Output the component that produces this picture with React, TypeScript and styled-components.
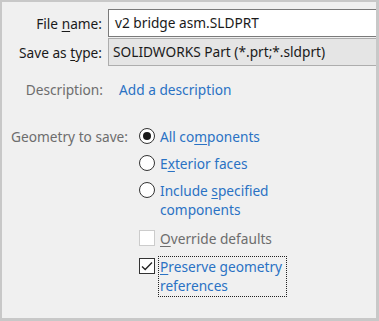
import * as React from 'react';
import styled, { createGlobalStyle } from 'styled-components';

const GlobalStyle = createGlobalStyle`
  html, body {
    margin: 0;
    padding: 0;
    background: #f0f0f0;
  }
  * {
    box-sizing: border-box;
  }
`;

const Frame = styled.div`
  width: 379px;
  height: 321px;
  overflow: hidden;
  background: #f0f0f0;
  border: 2px solid #c8c8c8;
  border-right-width: 3px;
  border-bottom-width: 3px;
  font-family: 'Noto Sans', 'Open Sans', sans-serif;
  font-size: 13.7px;
  color: #1a1a1a;
  padding-top: 7px;
`;

const FieldRow = styled.div<{ $gap?: number }>`
  display: flex;
  align-items: center;
  margin-bottom: ${(p) => p.$gap ?? 0}px;
`;

const Label = styled.label<{ $width: number; $muted?: boolean }>`
  width: ${(p) => p.$width}px;
  flex: none;
  text-align: right;
  white-space: nowrap;
  color: ${(p) => (p.$muted ? '#6d6d6d' : '#1a1a1a')};
`;

const TextBox = styled.div`
  margin-left: 6px;
  flex: 1;
  height: 28px;
  background: #ffffff;
  border: 1px solid #7a7a7a;
  border-right: none;
  padding: 0 0 1px 6px;
  display: flex;
  align-items: center;
  margin-right: -4px;
`;

const Combo = styled(TextBox)`
  background: #e5e5e5;
  border-color: #adadad;
  padding-left: 4px;
`;

const Link = styled.a`
  color: #2a72c4;
  text-decoration: none;
  white-space: nowrap;
`;

const Key = styled.span`
  text-decoration: underline;
  text-underline-offset: 2px;
`;

const Options = styled.div`
  display: flex;
  flex-direction: column;
  gap: 8px;
  margin-left: 11px;
`;

const Option = styled.div<{ $extra?: number }>`
  display: flex;
  align-items: flex-start;
  gap: 5px;
  line-height: 19px;
  margin-top: ${(p) => p.$extra ?? 0}px;
`;

const Radio = styled.span<{ $checked?: boolean }>`
  flex: none;
  width: 16px;
  height: 16px;
  margin-top: 1px;
  border-radius: 50%;
  border: 1px solid #333333;
  background: #ffffff;
  display: flex;
  align-items: center;
  justify-content: center;
  &::after {
    content: '';
    width: 8px;
    height: 8px;
    border-radius: 50%;
    background: #1a1a1a;
    display: ${(p) => (p.$checked ? 'block' : 'none')};
  }
`;

const Box = styled.span<{ $disabled?: boolean }>`
  flex: none;
  width: 16px;
  height: 16px;
  margin-top: 1px;
  border: 1px solid ${(p) => (p.$disabled ? '#cccccc' : '#333333')};
  background: #ffffff;
  display: flex;
  align-items: center;
  justify-content: center;
`;

const OptionText = styled.span<{ $disabled?: boolean; $focus?: boolean }>`
  color: ${(p) => (p.$disabled ? '#6d6d6d' : '#2a72c4')};
  white-space: nowrap;
  outline: ${(p) => (p.$focus ? '1px dotted #222' : 'none')};
  outline-offset: 0;
  padding: ${(p) => (p.$focus ? '0 4px 1px 1px' : '0')};
  margin-left: ${(p) => (p.$focus ? '-1px' : '0')};
`;

const Geometry = styled.div`
  display: flex;
  align-items: flex-start;
  margin-top: 28px;
`;

const GeoLabel = styled(Label)`
  line-height: 19px;
`;

export default function App() {
  return (
    <>
      <GlobalStyle />
      <Frame>
        <FieldRow $gap={1}>
          <Label $width={100}>
            File <Key>n</Key>ame:
          </Label>
          <TextBox>v2 bridge asm.SLDPRT</TextBox>
        </FieldRow>
        <FieldRow>
          <Label $width={100}>
            Save as <Key>t</Key>ype:
          </Label>
          <Combo>SOLIDWORKS Part (*.prt;*.sldprt)</Combo>
        </FieldRow>
        <FieldRow style={{ marginTop: 14 }}>
          <Label $width={101} $muted>
            Description:
          </Label>
          <Link href="#" style={{ marginLeft: 16 }}>
            Add a description
          </Link>
        </FieldRow>
        <Geometry>
          <GeoLabel $width={126} $muted>
            Geometry to save:
          </GeoLabel>
          <Options>
            <Option>
              <Radio $checked />
              <OptionText>
                All co<Key>m</Key>ponents
              </OptionText>
            </Option>
            <Option>
              <Radio />
              <OptionText>
                E<Key>x</Key>terior faces
              </OptionText>
            </Option>
            <Option>
              <Radio />
              <OptionText>
                Include <Key>s</Key>pecified
                <br />
                components
              </OptionText>
            </Option>
            <Option $extra={2}>
              <Box $disabled />
              <OptionText $disabled>
                <Key>O</Key>verride defaults
              </OptionText>
            </Option>
            <Option $extra={1}>
              <Box>
                <svg width="12" height="10" viewBox="0 0 12 10">
                  <path d="M1 5.5 L4.2 8.5 L11 1.5" fill="none" stroke="#222" strokeWidth="1.3" />
                </svg>
              </Box>
              <OptionText $focus>
                <Key>P</Key>reserve geometry
                <br />
                references
              </OptionText>
            </Option>
          </Options>
        </Geometry>
      </Frame>
    </>
  );
}
